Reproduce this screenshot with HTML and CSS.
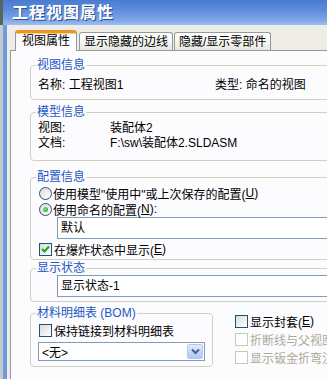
FILE: index.html
```html
<!DOCTYPE html>
<html>
<head>
    <meta charset="utf-8">
    <link rel="stylesheet" href="styles.css">
</head>
<body>
    <div class="window">
        <div class="titlebar">工程视图属性</div>
        <div class="dialog">
            <div class="tabs">
                <div class="tab active">视图属性</div>
                <div class="tab">显示隐藏的边线</div>
                <div class="tab">隐藏/显示零部件</div>
            </div>

            <div class="page">
                <fieldset class="group info">
                    <legend>视图信息</legend>
                    <div class="row">
                        <span class="name">名称: 工程视图1</span>
                        <span>类型: 命名的视图</span>
                    </div>
                </fieldset>

                <fieldset class="group model">
                    <legend>模型信息</legend>
                    <div class="row"><span class="label">视图:</span><span>装配体2</span></div>
                    <div class="row"><span class="label">文档:</span><span>F:\sw\装配体2.SLDASM</span></div>
                </fieldset>

                <fieldset class="group config">
                    <legend>配置信息</legend>
                    <div class="option"><span class="radio"></span>使用模型"使用中"或上次保存的配置(<u>U</u>)</div>
                    <div class="option"><span class="radio on"></span>使用命名的配置(<u>N</u>):</div>
                    <div class="field">默认</div>
                    <div class="option check-row">
                        <span class="check">
                            <svg width="11" height="11" viewBox="0 0 11 11"><polyline points="2,5 4.5,7.5 9,2.5" fill="none" stroke="#21a121" stroke-width="2"/></svg>
                        </span>在爆炸状态中显示(<u>E</u>)
                    </div>
                </fieldset>

                <fieldset class="group state">
                    <legend>显示状态</legend>
                    <div class="field">显示状态-1</div>
                </fieldset>

                <div class="bottom">
                    <fieldset class="group bom">
                        <legend>材料明细表 (BOM)</legend>
                        <div class="option"><span class="check"></span>保持链接到材料明细表</div>
                        <div class="select">
                            <span>&lt;无&gt;</span>
                            <span class="drop">
                                <svg width="9" height="7" viewBox="0 0 9 7"><polyline points="1,1.5 4.5,5 8,1.5" fill="none" stroke="#4d6185" stroke-width="2"/></svg>
                            </span>
                        </div>
                    </fieldset>

                    <div class="extras">
                        <div class="option"><span class="check"></span>显示封套(<u>E</u>)</div>
                        <div class="option disabled"><span class="check"></span>折断线与父视图对齐</div>
                        <div class="option disabled"><span class="check"></span>显示钣金折弯注释</div>
                    </div>
                </div>
            </div>
        </div>
    </div>
</body>
</html>
```

FILE: styles.css
```css
html, body {
    margin: 0;
}
body {
    width: 327px;
    height: 379px;
    overflow: hidden;
    background: linear-gradient(#56665f 0, #56665f 25px, #c3cccb 25px);
    font-family: "Liberation Sans", "Noto Sans CJK SC", sans-serif;
    font-size: 12px;
    color: #000;
}
.window {
    margin-left: 3px;
    width: 400px;
    height: 379px;
    border-left: 4px solid #7299dd;
    background: #edece6;
}
.titlebar {
    height: 25px;
    line-height: 23px;
    padding-left: 5px;
    margin-left: -4px;
    padding-left: 9px;
    background: linear-gradient(#4a7bd1 0%, #5f8cda 40%, #7ea6e6 80%, #9dbff1 100%);
    color: #fff;
    font-family: "Noto Sans CJK SC", sans-serif;
    font-weight: bold;
    font-size: 16px;
    letter-spacing: 1px;
    text-shadow: 1px 1px 0 #2b4f98;
}
.dialog {
    padding: 5px 0 0 3px;
}
.tabs {
    display: flex;
    align-items: flex-end;
    height: 21px;
    padding-left: 5px;
    margin-bottom: -1px;
}
.tab {
    height: 18px;
    line-height: 18px;
    padding: 0 4px;
    margin-left: 1px;
    border: 1px solid #919b9c;
    border-bottom: none;
    border-radius: 3px 3px 0 0;
    background: linear-gradient(#ffffff, #f3f3ef 60%, #e6e5df);
    white-space: nowrap;
}
.tab.active {
    position: relative;
    z-index: 1;
    height: 18px;
    padding: 0 6px;
    margin-left: 0;
    margin-right: 1px;
    border-top: 3px solid #f5b443;
    box-shadow: inset 0 1px 0 #ffd56a;
    border-top-color: #e8952d;
    background: #fcfcfe;
    line-height: 17px;
}
.page {
    position: relative;
    height: 330px;
    padding-top: 7px;
    border: 1px solid #919b9c;
    background: #fcfcfe;
}
.group {
    box-sizing: border-box;
    width: 340px;
    margin: 0 0 0 19px;
    padding: 0 0 0 7px;
    border: 1px solid #d0d0bf;
    border-radius: 4px;
    min-width: 0;
}
.group legend {
    margin-left: -2px;
    padding: 0 1px;
    line-height: 14px;
    color: #2457c4;
    white-space: nowrap;
}
.row {
    display: flex;
    line-height: 14px;
    white-space: nowrap;
}
.info {
    padding-top: 6px;
    padding-bottom: 7px;
}
.info .name {
    width: 177px;
}
.model {
    margin-top: 5px;
    padding-top: 2px;
    padding-bottom: 9px;
}
.model .row {
    line-height: 15px;
}
.model .label {
    width: 72px;
}
.config {
    margin-top: 9px;
    padding-top: 1px;
    padding-bottom: 2px;
}
.option {
    display: flex;
    align-items: center;
    height: 16px;
    white-space: nowrap;
}
.check-row {
    margin-top: 2px;
}
.radio {
    box-sizing: border-box;
    width: 13px;
    height: 13px;
    margin: 0 1px 0 1px;
    border: 1px solid #1c5180;
    border-radius: 50%;
    background: linear-gradient(135deg, #dcdcd7, #ffffff);
    display: flex;
    align-items: center;
    justify-content: center;
}
.radio.on::after {
    content: "";
    width: 5px;
    height: 5px;
    border-radius: 50%;
    background: radial-gradient(circle at 35% 35%, #7be07a, #21a121);
}
.check {
    box-sizing: border-box;
    width: 13px;
    height: 13px;
    margin: 0 2px 0 1px;
    border: 1px solid #1c5180;
    background: linear-gradient(135deg, #dcdcd7, #ffffff);
    display: flex;
    align-items: center;
    justify-content: center;
}
.field {
    box-sizing: border-box;
    height: 22px;
    line-height: 20px;
    width: 300px;
    margin-left: 19px;
    padding-left: 3px;
    border: 1px solid #7f9db9;
    background: #fff;
}
.state {
    margin-top: 1px;
    padding-bottom: 4px;
}
.bottom {
    display: flex;
    margin-top: 4px;
}
.bom {
    width: 183px;
    padding-top: 2px;
    padding-bottom: 5px;
}
.select {
    box-sizing: border-box;
    display: flex;
    align-items: center;
    justify-content: space-between;
    width: 167px;
    height: 19px;
    margin-top: 4px;
    padding: 0 1px 0 3px;
    border: 1px solid #7f9db9;
    background: #fff;
}
.drop {
    box-sizing: border-box;
    width: 16px;
    height: 15px;
    border: 1px solid #b5c8f2;
    border-radius: 2px;
    background: linear-gradient(#e3ebfd, #c3d4f8 60%, #b4c8f5);
    display: flex;
    align-items: center;
    justify-content: center;
}
.extras {
    margin: 6px 0 0 21px;
}
.extras .option {
    height: 18px;
}
.disabled {
    color: #aca899;
}
.disabled .check {
    border-color: #cac8bb;
    background: #fff;
}
```
